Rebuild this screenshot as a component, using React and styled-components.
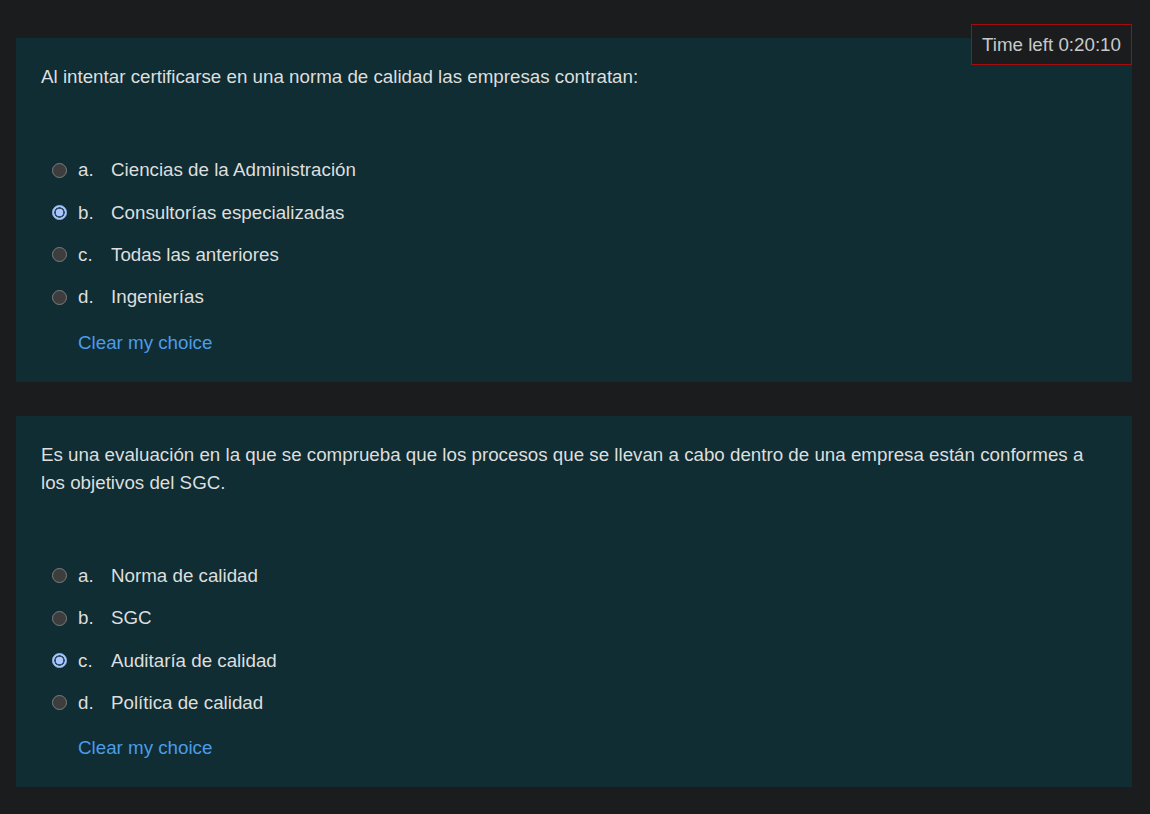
import React, { useState } from 'react';
import styled, { createGlobalStyle } from 'styled-components';

const GlobalStyle = createGlobalStyle`
    html, body {
        margin: 0;
        padding: 0;
        background: #1b1c1e;
    }
    body {
        font-family: "Liberation Sans", Arial, sans-serif;
    }
`;

const Page = styled.div`
    position: relative;
    padding: 38px 18px 26px 16px;
    display: flex;
    flex-direction: column;
    gap: 34px;
`;

const Timer = styled.div`
    position: absolute;
    top: 24px;
    right: 18px;
    width: 159px;
    height: 39px;
    box-sizing: content-box;
    border: 1px solid #a30d0d;
    background: #1b1c1e;
    color: #c9c9c9;
    font-size: 18.75px;
    display: flex;
    align-items: center;
    justify-content: center;
`;

const Card = styled.div`
    background: #0f2d33;
    padding: 25px 25px 28px 25px;
`;

const QuestionText = styled.div`
    color: #dedede;
    font-size: 18.75px;
    line-height: 28px;
`;

const Options = styled.div`
    margin-top: 58px;
    display: flex;
    flex-direction: column;
`;

const OptionRow = styled.label`
    display: flex;
    align-items: center;
    height: 42.4px;
    padding-left: 11px;
    color: #dedede;
    font-size: 18.75px;
    cursor: pointer;
`;

const Radio = styled.span`
    width: 15px;
    height: 15px;
    box-sizing: border-box;
    border-radius: 50%;
    flex: none;
    border: 1px solid ${props => (props.checked ? '#9fc4ff' : '#7d7d7d')};
    background: ${props => (props.checked
        ? 'radial-gradient(circle, #a6c8ff 0 3.5px, #3a4a66 4px 5px, #a6c8ff 5.5px)'
        : '#3d3d3d')};
`;

const Letter = styled.span`
    width: 33px;
    margin-left: 11px;
`;

const ClearLink = styled.a`
    display: inline-block;
    margin: 13px 0 0 37px;
    color: #4c9ce9;
    font-size: 18.75px;
    text-decoration: none;
    cursor: pointer;
`;

const questions = [
    {
        text: 'Al intentar certificarse en una norma de calidad las empresas contratan:',
        options: ['Ciencias de la Administración', 'Consultorías especializadas', 'Todas las anteriores', 'Ingenierías'],
        selected: 1,
    },
    {
        text: 'Es una evaluación en la que se comprueba que los procesos que se llevan a cabo dentro de una empresa están conformes a los objetivos del SGC.',
        options: ['Norma de calidad', 'SGC', 'Auditaría de calidad', 'Política de calidad'],
        selected: 2,
    },
];

const Question = ({ question }) => {
    const [selected, setSelected] = useState(question.selected);
    const letters = ['a.', 'b.', 'c.', 'd.'];

    return (
        <Card>
            <QuestionText>{question.text}</QuestionText>
            <Options>
                {question.options.map((opt, i) => (
                    <OptionRow key={opt} onClick={() => setSelected(i)}>
                        <Radio checked={selected === i} />
                        <Letter>{letters[i]}</Letter>
                        <span>{opt}</span>
                    </OptionRow>
                ))}
            </Options>
            <ClearLink onClick={() => setSelected(null)}>Clear my choice</ClearLink>
        </Card>
    );
};

const App = () => {
    return (
        <>
            <GlobalStyle />
            <Page>
                {questions.map(q => (
                    <Question key={q.text} question={q} />
                ))}
                <Timer>Time left 0:20:10</Timer>
            </Page>
        </>
    );
};

export default App;
